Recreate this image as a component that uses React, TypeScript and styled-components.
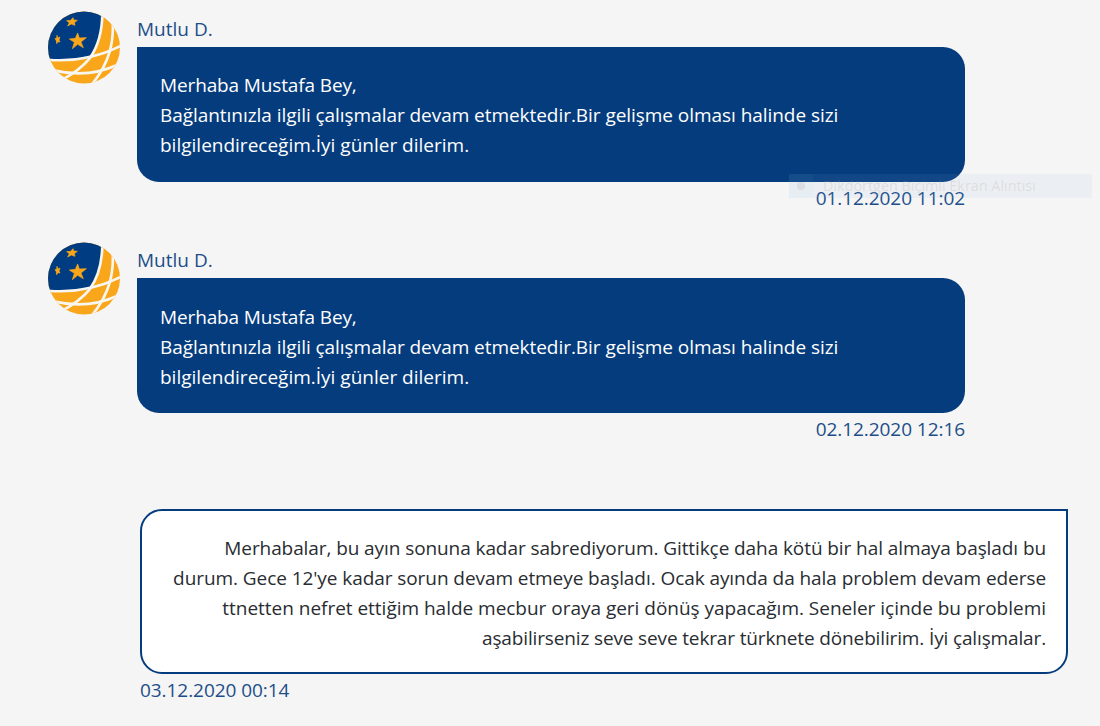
import React from "react";
import styled, { createGlobalStyle } from "styled-components";

const GlobalStyle = createGlobalStyle`
  * { box-sizing: border-box; }
  body {
    margin: 0;
    background: #f5f5f5;
    font-family: "Segoe UI", "Open Sans", "Noto Sans", sans-serif;
    font-size: 19px;
    line-height: 30px;
    overflow: hidden;
  }
`;

const Page = styled.main`
  position: relative;
  display: flex;
  flex-direction: column;
  width: 1100px;
  height: 726px;
  padding: 11px 32px 0 48px;
`;

const AgentMessage = styled.article`
  display: flex;
  align-items: flex-start;
  gap: 17px;
  height: 231px;
`;

const Avatar = styled.svg`
  flex: none;
  width: 72px;
  height: 73px;
`;

const AgentBody = styled.div`
  display: flex;
  flex-direction: column;
  width: 828px;
  padding-top: 3px;
`;

const Name = styled.div`
  height: 33px;
  color: #1d4e89;
`;

const AgentBubble = styled.div<{ $top: number }>`
  height: 135px;
  padding: ${(p) => p.$top}px 23px 0;
  border-radius: 0 22px 22px 22px;
  background: #053c7d;
  color: #fff;
`;

const Line = styled.div<{ $spacing?: number }>`
  height: 30px;
  white-space: nowrap;
  letter-spacing: ${(p) => p.$spacing ?? 0}px;
`;

const Stamp = styled.time<{ $align: "left" | "right" }>`
  display: block;
  margin-top: 1px;
  text-align: ${(p) => p.$align};
  letter-spacing: -0.06px;
  color: #1d4e89;
`;

const CustomerMessage = styled.article`
  display: flex;
  flex-direction: column;
  margin: 36px 0 0 92px;
`;

const CustomerBubble = styled.div`
  height: 165px;
  padding: 22px 20px 0;
  border: 2px solid #053c7d;
  border-radius: 22px 0 22px 22px;
  background: #fff;
  color: #292d31;
  text-align: right;
`;

const Ghost = styled.div`
  position: absolute;
  left: 789px;
  top: 174px;
  display: flex;
  align-items: center;
  width: 303px;
  height: 24px;
  background: rgba(145, 190, 235, 0.09);
  color: rgba(170, 155, 140, 0.22);
  font-size: 14.4px;
  white-space: nowrap;
`;

const GhostIcon = styled.span`
  display: flex;
  align-items: center;
  justify-content: center;
  width: 24px;
  height: 24px;
  margin-right: 10px;
  background: rgba(120, 210, 255, 0.04);
  &::before {
    content: "";
    width: 8px;
    height: 8px;
    border-radius: 50%;
    background: rgba(160, 150, 130, 0.16);
  }
`;

function Logo({ id }: { id: string }) {
  return (
    <Avatar viewBox="24 21 216 219">
      <clipPath id={id}>
        <circle cx="132" cy="130.500" r="108" />
      </clipPath>
      <g clipPath={`url(#${id})`}>
        <rect x="20" y="20" width="224" height="224" fill="#faa61a" />
        <path d="M20 18H187C188 75 176 124 148 163Q90 171 20 165Z" fill="#003c82" />
        <g fill="none" stroke="#f8f6f0" strokeWidth="8">
          <path d="M187 18C188 75 177 124 149 163Q119 199 68 226" />
          <path d="M217 35C224 110 211 176 152 246" />
          <path d="M20 167Q142 178 246 124" />
          <path d="M40 199Q145 223 229 184" />
        </g>
        <path d="M26 194L47 201L75 221L58 235L24 215Z" fill="#f5f5f5" />
      </g>
      <g fill="#faa61a" stroke="#faa61a" strokeWidth="2" strokeLinejoin="round">
        <path d="M113 87L118 102L139 101L123 114L130 131L113 121L97 134L103 115L88 105L106 103Z" />
        <path d="M99 41L101 48L112 49L103 56L105 64L94 60L83 66L88 56L80 50L92 49Z" />
        <path d="M51 94L54 102L60 99L57 108L60 114L54 113L50 119L49 110L45 104L50 103Z" />
      </g>
    </Avatar>
  );
}

const agentMessages = [
  { id: "first", date: "01.12.2020 11:02", top: 23 },
  { id: "second", date: "02.12.2020 12:16", top: 24 },
];

export default function App() {
  return (
    <>
      <GlobalStyle />
      <Page>
        {agentMessages.map((m) => (
          <AgentMessage key={m.id}>
            <Logo id={m.id} />
            <AgentBody>
              <Name>Mutlu D.</Name>
              <AgentBubble $top={m.top}>
                <Line $spacing={-0.13}>Merhaba Mustafa Bey,</Line>
                <Line $spacing={-0.05}>Bağlantınızla ilgili çalışmalar devam etmektedir.Bir gelişme olması halinde sizi</Line>
                <Line>bilgilendireceğim.İyi günler dilerim.</Line>
              </AgentBubble>
              <Stamp $align="right">{m.date}</Stamp>
            </AgentBody>
          </AgentMessage>
        ))}
        <CustomerMessage>
          <CustomerBubble>
            <Line $spacing={-0.085}>Merhabalar, bu ayın sonuna kadar sabrediyorum. Gittikçe daha kötü bir hal almaya başladı bu</Line>
            <Line $spacing={-0.07}>durum. Gece 12'ye kadar sorun devam etmeye başladı. Ocak ayında da hala problem devam ederse</Line>
            <Line $spacing={-0.02}>ttnetten nefret ettiğim halde mecbur oraya geri dönüş yapacağım. Seneler içinde bu problemi</Line>
            <Line $spacing={-0.14}>aşabilirseniz seve seve tekrar türknete dönebilirim. İyi çalışmalar.</Line>
          </CustomerBubble>
          <Stamp $align="left">03.12.2020 00:14</Stamp>
        </CustomerMessage>
        <Ghost>
          <GhostIcon />
          Dikdörtgen Biçimli Ekran Alıntısı
        </Ghost>
      </Page>
    </>
  );
}
